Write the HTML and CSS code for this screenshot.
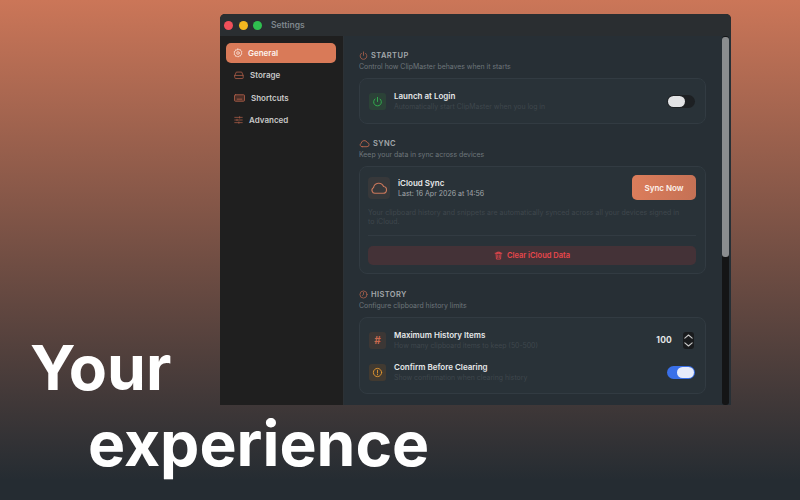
FILE: index.html
```html
<!DOCTYPE html>
<html>
<head>
    <title>Settings</title>
    <link rel="stylesheet" href="styles.css">
</head>
<body>
    <div class="window">
        <div class="titlebar">
            <span class="light red"></span>
            <span class="light yellow"></span>
            <span class="light green"></span>
            <span class="window-title">Settings</span>
        </div>
        <div class="window-body">
            <div class="sidebar">
                <div class="nav-item active">
                    <svg class="nav-icon gear" viewBox="0 0 24 24"><circle cx="12" cy="12" r="3.2"/><path d="M12 2l2.400 2.300 3.300-.5.800 3.200 3 1.600-1.300 3.100 1.300 3-3 1.600-.8 3.200-3.300-.5L12 22l-2.400-2.500-3.300.5-.8-3.200-3-1.600 1.300-3-1.300-3.100 3-1.600.8-3.200 3.300.5z"/></svg>
                    General
                </div>
                <div class="nav-item">
                    <svg class="nav-icon" viewBox="0 0 24 24"><path d="M2 13h20v6a1.500 1.500 0 0 1-1.500 1.500h-17A1.500 1.500 0 0 1 2 19z"/><path d="M2 13l3.500-8h13l3.500 8"/></svg>
                    Storage
                </div>
                <div class="nav-item">
                    <svg class="nav-icon wide" viewBox="0 0 24 18"><rect x="1" y="2" width="22" height="14" rx="2"/><path d="M7 11.500h10"/></svg>
                    Shortcuts
                </div>
                <div class="nav-item">
                    <svg class="nav-icon narrow" viewBox="0 0 24 24"><path d="M2 5h20M2 12h20M2 19h20"/><path d="M15 3v4M8 10v4M13 17v4"/></svg>
                    Advanced
                </div>
            </div>
            <div class="content">
                <div class="pane">
                    <div class="section">
                        <div class="section-head">
                            <svg class="head-icon" viewBox="0 0 24 24"><path d="M12 2.500v9"/><path d="M6.500 6a9 9 0 1 0 11 0"/></svg>
                            STARTUP
                        </div>
                        <div class="section-desc">Control how ClipMaster behaves when it starts</div>
                        <div class="card row-card">
                            <div class="icon-box green-box">
                                <svg viewBox="0 0 24 24"><path d="M12 3v9"/><path d="M6.500 6.500a8.500 8.500 0 1 0 11 0"/></svg>
                            </div>
                            <div class="row-text">
                                <div class="row-title">Launch at Login</div>
                                <div class="row-desc">Automatically start ClipMaster when you log in</div>
                            </div>
                            <div class="toggle off"><span class="knob"></span></div>
                        </div>
                    </div>

                    <div class="section sync-section">
                        <div class="section-head">
                            <svg class="head-icon cloud" viewBox="0 0 24 24"><path d="M7 19h10.500a4.500 4.500 0 0 0 .6-8.960A7 7 0 0 0 4.700 11.500 4 4 0 0 0 7 19z"/></svg>
                            SYNC
                        </div>
                        <div class="section-desc">Keep your data in sync across devices</div>
                        <div class="card sync-card">
                            <div class="sync-top">
                                <div class="icon-box sync-box">
                                    <svg viewBox="0 0 24 24"><path d="M7 19h10.500a4.500 4.500 0 0 0 .6-8.960A7 7 0 0 0 4.700 11.500 4 4 0 0 0 7 19z"/></svg>
                                </div>
                                <div class="row-text sync-text">
                                    <div class="row-title">iCloud Sync</div>
                                    <div class="sync-last">Last: 16 Apr 2026 at 14:56</div>
                                </div>
                                <div class="sync-btn">Sync Now</div>
                            </div>
                            <div class="sync-note">Your clipboard history and snippets are automatically synced across all your devices signed in to iCloud.</div>
                            <div class="divider"></div>
                            <div class="clear-btn">
                                <svg viewBox="0 0 24 24"><path d="M3 6h18"/><path d="M9 6V3h6v3"/><path d="M5.500 6l1 15.500h11l1-15.500z"/><path d="M10 10.500v7M14 10.500v7"/></svg>
                                Clear iCloud Data
                            </div>
                        </div>
                    </div>

                    <div class="section">
                        <div class="section-head">
                            <svg class="head-icon" viewBox="0 0 24 24"><circle cx="12" cy="12" r="9.500"/><path d="M12 6.500V12l-3 2.500"/></svg>
                            HISTORY
                        </div>
                        <div class="section-desc">Configure clipboard history limits</div>
                        <div class="card history-card">
                            <div class="history-row">
                                <div class="icon-box red-box">#</div>
                                <div class="row-text">
                                    <div class="row-title">Maximum History Items</div>
                                    <div class="row-desc">How many clipboard items to keep (50-500)</div>
                                </div>
                                <span class="count">100</span>
                                <div class="stepper">
                                    <svg viewBox="0 0 12 18"><path d="M2 6.500L6 3l4 3.500"/><path d="M2 11.500L6 15l4-3.500"/></svg>
                                </div>
                            </div>
                            <div class="history-row">
                                <div class="icon-box orange-box">
                                    <svg viewBox="0 0 24 24"><circle cx="12" cy="12" r="9"/><path d="M12 7v6M12 16v1"/></svg>
                                </div>
                                <div class="row-text">
                                    <div class="row-title">Confirm Before Clearing</div>
                                    <div class="row-desc">Show confirmation when clearing history</div>
                                </div>
                                <div class="toggle on"><span class="knob"></span></div>
                            </div>
                        </div>
                    </div>
                </div>
                <div class="scrollbar"><div class="thumb"></div></div>
            </div>
        </div>
    </div>

    <div class="headline">
        <div class="line-one">Your</div>
        <div class="line-two">experience</div>
    </div>
</body>
</html>
```

FILE: styles.css
```css
html, body {
    height: 100%;
}
body {
    margin: 0;
    width: 800px;
    height: 500px;
    overflow: hidden;
    position: relative;
    font-family: Inter, "Noto Sans", sans-serif;
    background: linear-gradient(180deg, #cb7658 0%, #252c32 96%);
}
svg {
    fill: none;
    stroke: currentColor;
    stroke-width: 2;
    stroke-linecap: round;
    stroke-linejoin: round;
}

/* window */
.window {
    position: absolute;
    left: 220px;
    top: 14px;
    width: 511px;
    height: 391px;
    display: flex;
    flex-direction: column;
    background: #1f2021;
    border-radius: 5px 5px 0 0;
    overflow: hidden;
}
.titlebar {
    height: 22px;
    display: flex;
    align-items: center;
    padding-left: 4px;
    background: #2a2e31;
    flex-shrink: 0;
}
.light {
    width: 9px;
    height: 9px;
    border-radius: 50%;
    margin-right: 5.500px;
}
.red { background: #f0505a; }
.yellow { background: #f2b71f; }
.green { background: #2fc04f; }
.window-title {
    margin-left: 3.500px;
    font-size: 8.500px;
    font-weight: 600;
    color: #7f878d;
}
.window-body {
    flex: 1;
    display: flex;
    min-height: 0;
}

/* sidebar */
.sidebar {
    width: 124px;
    flex-shrink: 0;
    padding: 7px 7px 0 6px;
    box-sizing: border-box;
    background: #1f1f1f;
    border-right: 1px solid #2c3135;
}
.nav-item {
    height: 20px;
    margin-bottom: 2.400px;
    display: flex;
    align-items: center;
    gap: 6px;
    padding-left: 8px;
    border-radius: 5px;
    font-size: 8px;
    font-weight: 600;
    color: #c9c9c9;
}
.nav-item.active {
    background: #d97a58;
    color: #fdf3ee;
}
.nav-icon {
    width: 10px;
    height: 10px;
    color: #a95c47;
}
.nav-icon.wide {
    width: 11px;
    fill: #4a2f28;
}
.nav-icon.narrow {
    width: 9px;
}
.nav-icon.gear {
    margin: 0 -1px;
}
.active .nav-icon {
    color: #f8ddd2;
}

/* content */
.content {
    flex: 1;
    display: flex;
    min-width: 0;
    background: #272f35;
}
.pane {
    flex: 1;
    min-width: 0;
    padding: 14px 16px 0 15px;
}
.scrollbar {
    width: 7px;
    margin-right: 2px;
    background: #141516;
    flex-shrink: 0;
    border-radius: 3px;
}
.thumb {
    height: 220px;
    margin-top: 1px;
    background: #8a8d8f;
    border-radius: 3px;
}
.section {
    margin-bottom: 14px;
}
.sync-section {
    margin-bottom: 15px;
}
.section-head {
    height: 11px;
    display: flex;
    align-items: center;
    gap: 3px;
    font-size: 7.500px;
    font-weight: 600;
    letter-spacing: 0.4px;
    color: #a4a9ac;
}
.head-icon {
    width: 9px;
    height: 9px;
    color: #b8654d;
}
.head-icon.cloud {
    width: 11px;
    height: 11px;
}
.section-desc {
    height: 11px;
    line-height: 11px;
    font-size: 6.900px;
    color: #6e767b;
}
.card {
    margin-top: 6px;
    box-sizing: border-box;
    background: #293238;
    border: 1px solid #323b42;
    border-radius: 8px;
}
.row-card {
    height: 46px;
    display: flex;
    align-items: center;
    padding: 0 10px 0 9px;
}
.icon-box {
    width: 17px;
    height: 17px;
    border-radius: 3px;
    display: flex;
    align-items: center;
    justify-content: center;
    flex-shrink: 0;
}
.icon-box svg {
    width: 11px;
    height: 11px;
}
.green-box {
    background: #2b4237;
    color: #32b350;
}
.red-box {
    background: #3c3735;
    color: #c9694e;
    font-size: 10px;
    font-weight: 700;
}
.orange-box {
    background: #413a31;
    color: #e3972f;
}
.row-text {
    flex: 1;
    min-width: 0;
    margin-left: 8px;
}
.row-title {
    font-size: 8px;
    font-weight: 600;
    line-height: 11px;
    color: #e6e8e9;
}
.row-desc {
    font-size: 6.900px;
    line-height: 10px;
    color: #3f474d;
    white-space: nowrap;
}
.toggle {
    width: 28px;
    height: 13px;
    border-radius: 7px;
    display: flex;
    align-items: center;
    padding: 0 1px;
    box-sizing: border-box;
}
.toggle.off {
    background: #1d2023;
}
.toggle.on {
    background: #3a70e8;
    justify-content: flex-end;
}
.knob {
    width: 17px;
    height: 11px;
    border-radius: 6px;
    background: #e2e3e5;
}
.on .knob {
    background: #e6ebfb;
}

/* sync card */
.sync-card {
    height: 108px;
    padding: 8px 9px 0 8px;
}
.sync-top {
    display: flex;
    align-items: center;
    height: 25px;
}
.sync-box {
    width: 22px;
    height: 22px;
    background: #37383a;
    color: #c9775b;
    border-radius: 4px;
}
.sync-box svg {
    width: 18px;
    height: 18px;
    stroke-width: 1.500;
}
.sync-text {
    padding-top: 2px;
}
.sync-last {
    font-size: 7px;
    line-height: 10px;
    color: #a0a5a8;
}
.sync-btn {
    width: 64px;
    height: 25px;
    display: flex;
    align-items: center;
    justify-content: center;
    border-radius: 5px;
    background: linear-gradient(90deg, #dc7d5b, #c57155);
    color: #fdf3ee;
    font-size: 8px;
    font-weight: 600;
}
.sync-note {
    margin-top: 8px;
    padding-right: 14px;
    font-size: 7px;
    line-height: 9px;
    color: #3f474d;
}
.divider {
    margin-top: 9px;
    height: 1px;
    background: #323b42;
}
.clear-btn {
    margin-top: 10px;
    height: 19px;
    display: flex;
    align-items: center;
    justify-content: center;
    gap: 4px;
    border-radius: 5px;
    background: #443237;
    color: #e8474c;
    font-size: 7.500px;
    font-weight: 600;
}
.clear-btn svg {
    width: 9px;
    height: 9px;
    stroke-width: 2.200;
}

/* history card */
.history-card {
    height: 77px;
    padding: 6px 10px 0 9px;
}
.history-row {
    height: 32px;
    display: flex;
    align-items: center;
}
.count {
    margin-right: 11px;
    font-size: 8.500px;
    font-weight: 700;
    letter-spacing: 0.2px;
    color: #e6e8e9;
}
.stepper {
    width: 11px;
    height: 17px;
    border-radius: 3px;
    background: #191b1d;
    margin-right: 1px;
    color: #c8c8c8;
    display: flex;
}
.stepper svg {
    width: 11px;
    height: 17px;
    stroke-width: 1.200;
}

/* marketing text */
.headline {
    position: absolute;
    left: 30px;
    top: 330px;
    color: #fff;
    font-size: 62.400px;
    font-weight: 700;
    line-height: 76px;
}
.line-two {
    margin-left: 58px;
}
```
